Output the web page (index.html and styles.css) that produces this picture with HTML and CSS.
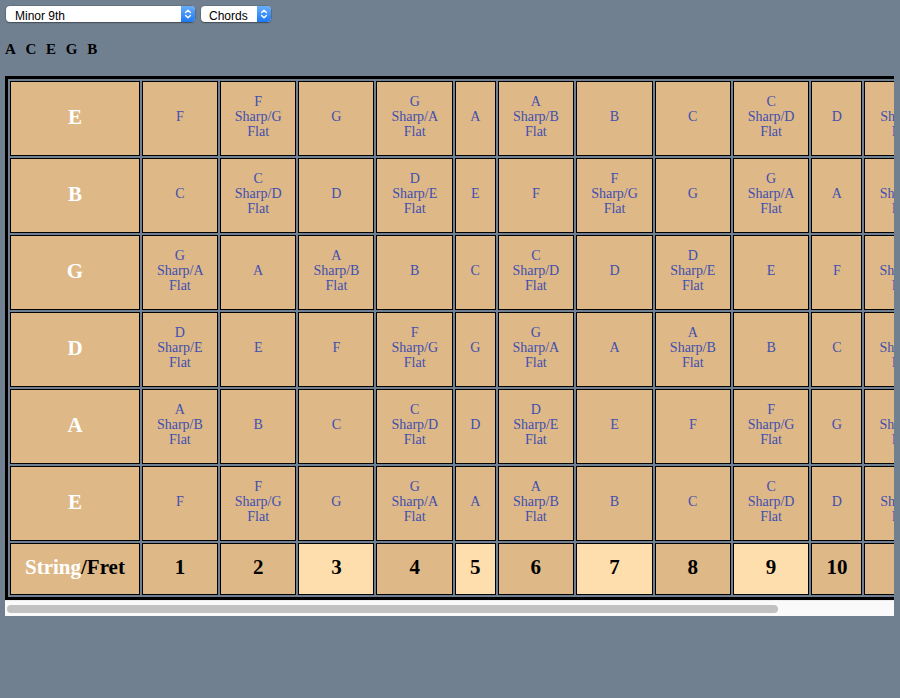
FILE: index.html
```html
<!DOCTYPE html>
<html>
<head>
<meta charset="utf-8">
<title>Fretboard</title>
<link rel="stylesheet" href="styles.css">
</head>
<body>
<div class="page">
  <div class="controls">
    <div class="select wide">
      <select><option>Minor 9th</option></select>
      <span class="arrow"><svg width="14" height="16" viewBox="0 0 14 16"><path d="M4.6 6.6 L7 4.2 L9.4 6.6 M4.6 9.4 L7 11.8 L9.4 9.4" fill="none" stroke="#fff" stroke-width="1.4" stroke-linecap="round" stroke-linejoin="round"/></svg></span>
    </div>
    <div class="select narrow">
      <select><option>Chords</option></select>
      <span class="arrow"><svg width="14" height="16" viewBox="0 0 14 16"><path d="M4.6 6.6 L7 4.2 L9.4 6.6 M4.6 9.4 L7 11.8 L9.4 9.4" fill="none" stroke="#fff" stroke-width="1.4" stroke-linecap="round" stroke-linejoin="round"/></svg></span>
    </div>
  </div>
  <div class="chord-notes"><span>A</span><span>C</span><span>E</span><span>G</span><span>B</span></div>
  <div class="frame">
    <div class="viewport">
      <table class="board">
        <tr>
          <th class="string">E</th>
          <td>F</td><td>F Sharp/G Flat</td><td>G</td><td>G Sharp/A Flat</td><td>A</td><td>A Sharp/B Flat</td><td>B</td><td>C</td><td>C Sharp/D Flat</td><td>D</td><td>D Sharp/E Flat</td><td>E</td>
        </tr>
        <tr>
          <th class="string">B</th>
          <td>C</td><td>C Sharp/D Flat</td><td>D</td><td>D Sharp/E Flat</td><td>E</td><td>F</td><td>F Sharp/G Flat</td><td>G</td><td>G Sharp/A Flat</td><td>A</td><td>A Sharp/B Flat</td><td>B</td>
        </tr>
        <tr>
          <th class="string">G</th>
          <td>G Sharp/A Flat</td><td>A</td><td>A Sharp/B Flat</td><td>B</td><td>C</td><td>C Sharp/D Flat</td><td>D</td><td>D Sharp/E Flat</td><td>E</td><td>F</td><td>F Sharp/G Flat</td><td>G</td>
        </tr>
        <tr>
          <th class="string">D</th>
          <td>D Sharp/E Flat</td><td>E</td><td>F</td><td>F Sharp/G Flat</td><td>G</td><td>G Sharp/A Flat</td><td>A</td><td>A Sharp/B Flat</td><td>B</td><td>C</td><td>C Sharp/D Flat</td><td>D</td>
        </tr>
        <tr>
          <th class="string">A</th>
          <td>A Sharp/B Flat</td><td>B</td><td>C</td><td>C Sharp/D Flat</td><td>D</td><td>D Sharp/E Flat</td><td>E</td><td>F</td><td>F Sharp/G Flat</td><td>G</td><td>G Sharp/A Flat</td><td>A</td>
        </tr>
        <tr>
          <th class="string">E</th>
          <td>F</td><td>F Sharp/G Flat</td><td>G</td><td>G Sharp/A Flat</td><td>A</td><td>A Sharp/B Flat</td><td>B</td><td>C</td><td>C Sharp/D Flat</td><td>D</td><td>D Sharp/E Flat</td><td>E</td>
        </tr>
        <tr class="frets">
          <th class="corner"><span class="light">String</span>/Fret</th>
          <th>1</th><th>2</th><th class="marker">3</th><th>4</th><th class="marker">5</th><th>6</th><th class="marker">7</th><th>8</th><th class="marker">9</th><th>10</th><th>11</th><th class="marker">12</th>
        </tr>
      </table>
    </div>
    <div class="hscroll"><div class="thumb"></div></div>
  </div>
</div>
</body>
</html>
```

FILE: styles.css
```css
html, body {
  margin: 0;
  padding: 0;
  background: #708090;
}

.page {
  padding: 6px 6px 0 5px;
  font-family: "Liberation Serif", "Times New Roman", serif;
}

.controls {
  display: flex;
  gap: 6px;
  margin-left: 1px;
}

.select {
  position: relative;
  height: 16px;
  border-radius: 4px;
  background: #fff;
  box-shadow: 0 0 0 0.5px rgba(0, 0, 0, 0.18), 0 1px 1.5px rgba(0, 0, 0, 0.35);
}

.select.wide { width: 189px; }
.select.narrow { width: 70px; }

.select select {
  appearance: none;
  -webkit-appearance: none;
  border: 0;
  outline: none;
  background: transparent;
  margin: 0;
  width: 100%;
  height: 16px;
  padding: 0 0 0 9px;
  font-family: "Liberation Sans", Arial, sans-serif;
  font-size: 12px;
  line-height: 16px;
  color: #000;
}

.select.narrow select { padding-left: 8px; }

.arrow {
  position: absolute;
  top: 0;
  right: 0;
  width: 14px;
  height: 16px;
  border-radius: 0 4px 4px 0;
  background: linear-gradient(#68aefb, #1c78f3);
  display: flex;
}

.chord-notes {
  display: flex;
  gap: 9.7px;
  margin-top: 19px;
  font-size: 15px;
  line-height: 17px;
  font-weight: bold;
  color: #000;
}

.frame {
  margin-top: 18px;
}

.viewport {
  overflow: hidden;
}

.hscroll {
  height: 16px;
  background: #fafafa;
  border-top: 1px solid #ececec;
  box-sizing: border-box;
  padding-top: 4px;
}

.thumb {
  width: 771px;
  height: 8px;
  margin-left: 2px;
  border-radius: 4px;
  background: #c1c1c1;
}

.board {
  border: 3px solid #000;
  border-collapse: separate;
  border-spacing: 2px;
}

.board td,
.board th {
  border: 1px solid #000;
  background: #deb887;
  padding: 12px 14px 16px;
  text-align: center;
  vertical-align: middle;
}

.board td {
  font-size: 14px;
  line-height: 15px;
  color: #3f4fb0;
}

.board th {
  font-size: 21px;
  line-height: 22px;
  font-weight: bold;
  color: #000;
}

.board th.string {
  color: #fff;
}

.board th.marker {
  background: #ffdead;
}

.board .light {
  color: #fff;
}
```
